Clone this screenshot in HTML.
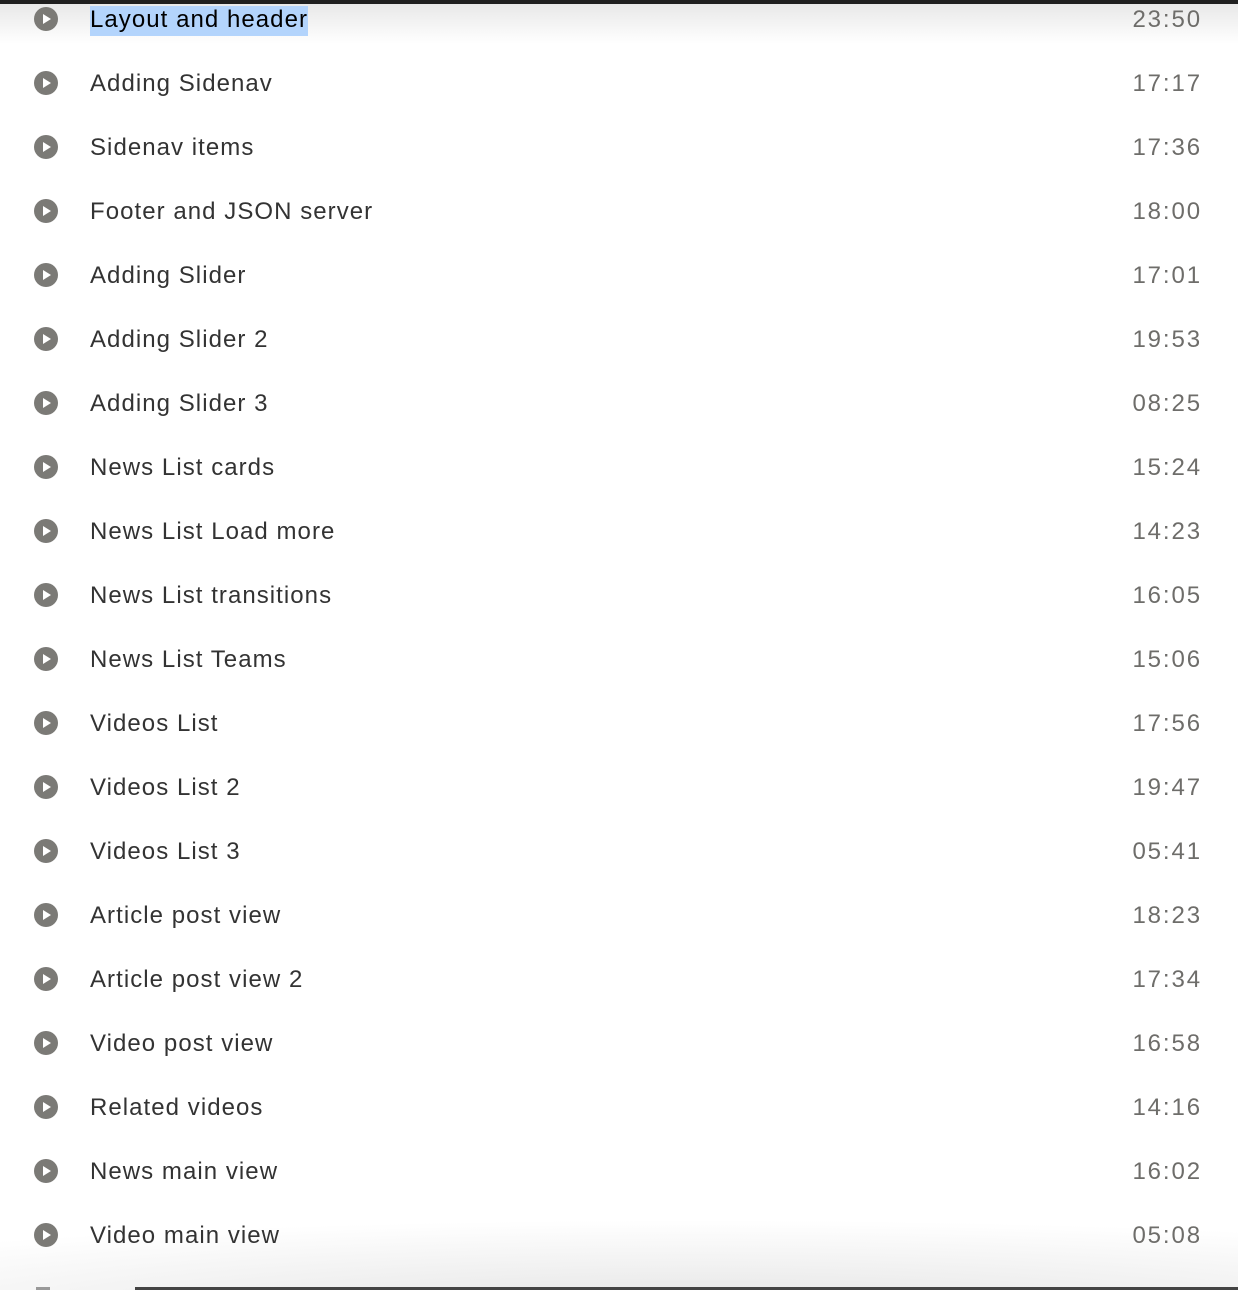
<!DOCTYPE html>
<html><head><meta charset="utf-8"><style>
html,body{margin:0;padding:0;width:1238px;height:1290px;overflow:hidden;background:#fff;font-family:"Liberation Sans",Arial,sans-serif;position:relative}
.top{position:absolute;left:0;top:0;width:1238px;height:4px;background:#1f1f1f}
.topfade{position:absolute;left:0;top:4px;width:1238px;height:40px;background:linear-gradient(#e8e8e8,rgba(255,255,255,0))}
.row{position:absolute;left:0;width:1238px;height:40px}
.ic{position:absolute;left:34px;top:-12px;width:24px;height:24px;border-radius:50%;background:#7b7a76}
.ic:after{content:"";position:absolute;left:9px;top:6.5px;border-left:8px solid #fff;border-top:5.5px solid transparent;border-bottom:5.5px solid transparent}
.t{position:absolute;left:90px;top:-14px;font-size:24px;line-height:30px;color:#333;letter-spacing:1.05px;white-space:nowrap}
.d{position:absolute;right:36px;top:-14px;font-size:24px;line-height:30px;color:#6e6d6a;letter-spacing:1.9px}
.sel{background:#b3d4fc;color:#000;padding:0 0 3px 0}
.botfade{position:absolute;left:0;top:1200px;width:1238px;height:90px;background:radial-gradient(ellipse 1100px 90px at 700px 110px,#e4e4e4,rgba(255,255,255,0))}
.bline{position:absolute;left:135px;top:1287px;width:1103px;height:3px;background:#444}
.bstub{position:absolute;left:36px;top:1287px;width:14px;height:3px;background:#999}
</style></head><body>
<div class="topfade"></div><div class="botfade"></div>
<div class="top"></div>
<div class="row" style="top:19px"><div class="ic"></div><div class="t"><span class="sel">Layout and header</span></div><div class="d">23:50</div></div>
<div class="row" style="top:83px"><div class="ic"></div><div class="t">Adding Sidenav</div><div class="d">17:17</div></div>
<div class="row" style="top:147px"><div class="ic"></div><div class="t">Sidenav items</div><div class="d">17:36</div></div>
<div class="row" style="top:211px"><div class="ic"></div><div class="t">Footer and JSON server</div><div class="d">18:00</div></div>
<div class="row" style="top:275px"><div class="ic"></div><div class="t">Adding Slider</div><div class="d">17:01</div></div>
<div class="row" style="top:339px"><div class="ic"></div><div class="t">Adding Slider 2</div><div class="d">19:53</div></div>
<div class="row" style="top:403px"><div class="ic"></div><div class="t">Adding Slider 3</div><div class="d">08:25</div></div>
<div class="row" style="top:467px"><div class="ic"></div><div class="t">News List cards</div><div class="d">15:24</div></div>
<div class="row" style="top:531px"><div class="ic"></div><div class="t">News List Load more</div><div class="d">14:23</div></div>
<div class="row" style="top:595px"><div class="ic"></div><div class="t">News List transitions</div><div class="d">16:05</div></div>
<div class="row" style="top:659px"><div class="ic"></div><div class="t">News List Teams</div><div class="d">15:06</div></div>
<div class="row" style="top:723px"><div class="ic"></div><div class="t">Videos List</div><div class="d">17:56</div></div>
<div class="row" style="top:787px"><div class="ic"></div><div class="t">Videos List 2</div><div class="d">19:47</div></div>
<div class="row" style="top:851px"><div class="ic"></div><div class="t">Videos List 3</div><div class="d">05:41</div></div>
<div class="row" style="top:915px"><div class="ic"></div><div class="t">Article post view</div><div class="d">18:23</div></div>
<div class="row" style="top:979px"><div class="ic"></div><div class="t">Article post view 2</div><div class="d">17:34</div></div>
<div class="row" style="top:1043px"><div class="ic"></div><div class="t">Video post view</div><div class="d">16:58</div></div>
<div class="row" style="top:1107px"><div class="ic"></div><div class="t">Related videos</div><div class="d">14:16</div></div>
<div class="row" style="top:1171px"><div class="ic"></div><div class="t">News main view</div><div class="d">16:02</div></div>
<div class="row" style="top:1235px"><div class="ic"></div><div class="t">Video main view</div><div class="d">05:08</div></div>
<div class="bstub"></div><div class="bline"></div>
</body></html>
